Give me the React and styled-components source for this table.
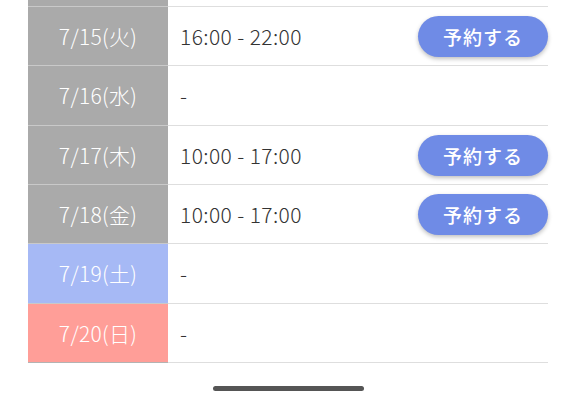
import React from "react";
import styled, { createGlobalStyle } from "styled-components";

const rows = [
  { date: "7/15(火)", time: "16:00 - 22:00", kind: "weekday", bookable: true },
  { date: "7/16(水)", time: "-", kind: "weekday" },
  { date: "7/17(木)", time: "10:00 - 17:00", kind: "weekday", bookable: true },
  { date: "7/18(金)", time: "10:00 - 17:00", kind: "weekday", bookable: true },
  { date: "7/19(土)", time: "-", kind: "sat" },
  { date: "7/20(日)", time: "-", kind: "sun" },
];

const dateColors = {
  weekday: "#aaaaaa",
  sat: "#a6b9f5",
  sun: "#ff9e98",
};

const GlobalStyle = createGlobalStyle`
  html, body {
    margin: 0;
    background: #fff;
    font-family: "Noto Sans CJK JP", "Noto Sans", sans-serif;
  }
`;

const Screen = styled.div`
  width: 576px;
  height: 407px;
  overflow: hidden;
  display: flex;
  flex-direction: column;
`;

const Table = styled.div`
  margin: 0 28px;
  display: flex;
  flex-direction: column;
`;

const Row = styled.div`
  display: grid;
  grid-template-columns: 140px 1fr;
  height: ${(p) => p.$h || "59.33px"};
  box-sizing: border-box;
  border-bottom: 1px solid #dedede;
`;

const DateCell = styled.div`
  background: ${(p) => dateColors[p.$kind]};
  color: #fff;
  font-size: 21px;
  font-weight: 300;
  letter-spacing: 0.3px;
  display: flex;
  align-items: center;
  justify-content: center;
  margin-bottom: -1px;
  border-bottom: 1px solid ${(p) => (p.$last ? "#b3b3b3" : "#c9c9c9")};
`;

const InfoCell = styled.div`
  display: flex;
  align-items: center;
  justify-content: space-between;
  padding-left: 12px;
  color: #333;
  font-size: 21px;
  font-weight: 300;
  letter-spacing: 0.4px;
`;

const BookButton = styled.button`
  width: 130px;
  height: 41px;
  border: none;
  border-radius: 21px;
  background: #6f8be6;
  color: #fff;
  font-family: inherit;
  font-size: 19px;
  font-weight: 500;
  letter-spacing: 1px;
  box-shadow: 0 2px 4px rgba(0, 0, 0, 0.25);
  margin-top: 1px;
`;

const HomeBar = styled.div`
  width: 151px;
  height: 5px;
  border-radius: 3px;
  background: #555;
  margin: 23px auto 0;
`;

export default function App() {
  return (
    <Screen>
      <GlobalStyle />
      <Table>
        <Row $h="7px">
          <DateCell $kind="weekday" />
          <InfoCell />
        </Row>
        {rows.map((r, i) => (
          <Row key={r.date}>
            <DateCell $kind={r.kind} $last={i === rows.length - 1}>
              {r.date}
            </DateCell>
            <InfoCell>
              <span>{r.time}</span>
              {r.bookable && <BookButton>予約する</BookButton>}
            </InfoCell>
          </Row>
        ))}
      </Table>
      <HomeBar />
    </Screen>
  );
}
